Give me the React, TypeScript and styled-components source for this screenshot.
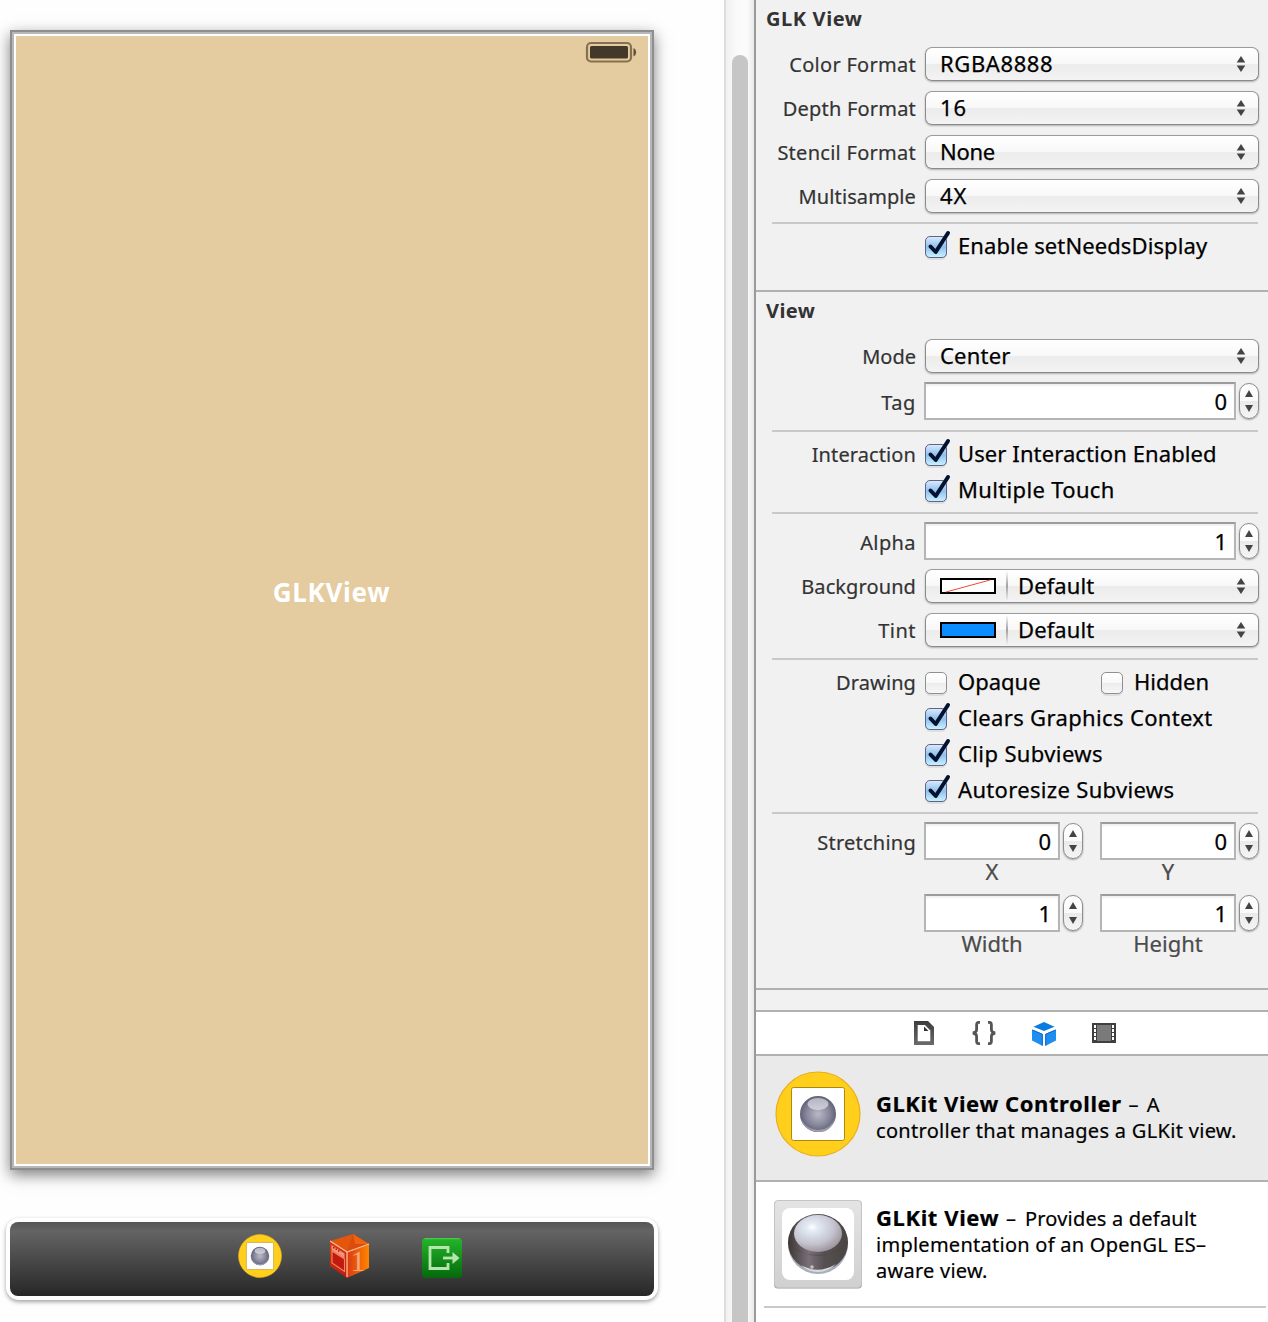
import React from "react";
import styled, { createGlobalStyle, css } from "styled-components";

const Global = createGlobalStyle`
  * { box-sizing: border-box; }
  body {
    margin: 0;
    background: #fff;
    font-family: "Noto Sans", "Open Sans", sans-serif;
    overflow: hidden;
  }
`;

const Window = styled.div`
  display: flex;
  width: 1268px;
  height: 1322px;
  background: #fefefe;
  overflow: hidden;
`;

const Canvas = styled.main`
  width: 724px;
  padding: 30px 0 0 6px;
  display: flex;
  flex-direction: column;
  gap: 48px;
`;

const Device = styled.section`
  width: 644px;
  height: 1140px;
  margin-left: 4px;
  border: 2px solid #8e8e8e;
  box-shadow: 0 5px 14px rgba(0, 0, 0, 0.5);
`;

const Bezel = styled.div`
  height: 100%;
  border: 2px solid #b7b7b7;
  background: #fff;
  padding: 2px;
`;

const Screen = styled.div`
  height: 100%;
  background: #e5cba0;
  display: flex;
  flex-direction: column;
`;

const StatusBar = styled.div`
  height: 32px;
  padding: 4px 10px 0 0;
  display: flex;
  justify-content: flex-end;
`;

const ScreenBody = styled.div`
  flex: 1;
  display: flex;
  align-items: center;
  justify-content: center;
  padding: 0 1px 48px 0;
  color: #fff;
  font-size: 26px;
  font-weight: 700;
`;

const Dock = styled.div`
  width: 652px;
  height: 82px;
  border: 4px solid #fff;
  border-radius: 13px;
  background: #fff;
  box-shadow: 0 2px 4px rgba(0, 0, 0, 0.36);
`;

const DockInner = styled.div`
  height: 74px;
  border-radius: 8px;
  background: linear-gradient(#555 0, #646464 12%, #272727 100%);
  display: flex;
  align-items: center;
  padding: 0 0 6px 228px;
  gap: 48px;
`;

const ScrollTrack = styled.div`
  width: 30px;
  border-left: 2px solid #dedede;
  padding: 55px 0 0 6px;
  background: linear-gradient(90deg, #f1f1f1, #fafafa 40%, #fbfbfb 75%, #e9e9e9);
`;

const ScrollThumb = styled.div`
  width: 16px;
  height: 1300px;
  border-radius: 8px;
  background: #c6c6c6;
`;

const Inspector = styled.aside`
  width: 514px;
  border-left: 2px solid #999;
  background: #f1f1f1;
`;

const Section = styled.section<{ $h: number }>`
  height: ${(p) => p.$h}px;
  border-bottom: 2px solid #b1b1b1;
`;

const Title = styled.h2`
  margin: 0;
  height: 42px;
  padding: 5px 0 0 10px;
  font-size: 20px;
  line-height: 27px;
  font-weight: 700;
  color: #333;
`;

const Row = styled.div<{ $h: number }>`
  display: grid;
  grid-template-columns: 160px 344px;
  column-gap: 8px;
  height: ${(p) => p.$h}px;
  align-items: center;
`;

const Label = styled.label<{ $low?: boolean }>`
  text-align: right;
  font-size: 20px;
  line-height: 28px;
  padding-top: ${(p) => (p.$low ? 4 : 2)}px;
  color: #333;
  -webkit-text-stroke: 0.2px #333;
`;

const Controls = styled.div`
  display: flex;
  align-items: center;
`;

const Divider = styled.hr<{ $top?: number }>`
  margin: ${(p) => p.$top ?? 4}px 10px 4px 16px;
  border: 0;
  height: 2px;
  background: #c9c9c9;
`;

const Select = styled.button`
  display: flex;
  align-items: center;
  width: 334px;
  height: 34px;
  margin: 0 0 0 1px;
  padding: 0 12px 0 14px;
  border: 1px solid #8b8b8b;
  border-top-color: #9c9c9c;
  border-radius: 7px;
  background: linear-gradient(#fff 0, #f8f8f8 50%, #ececec 51%, #f3f3f3 100%);
  box-shadow: 0 1px 2px rgba(0, 0, 0, 0.28);
  font-family: inherit;
  font-size: 22px;
  line-height: 30px;
  color: #000;
  text-align: left;
`;

const Value = styled.span`
  flex: 1;
  padding-bottom: 2px;
  -webkit-text-stroke: 0.25px #000;
`;

const Well = styled.span`
  display: flex;
  align-items: center;
  gap: 10px;
  margin-right: 10px;
`;

const WellRule = styled.span`
  width: 2px;
  height: 30px;
  background: linear-gradient(rgba(160, 160, 160, 0), #a2a2a2 50%, rgba(160, 160, 160, 0));
`;

const Field = styled.div<{ $w: number }>`
  flex: none;
  width: ${(p) => p.$w}px;
  height: 38px;
  border: 2px solid #b5b5b5;
  border-top-color: #9c9c9c;
  background: #fff;
  box-shadow: inset 0 2px 2px rgba(0, 0, 0, 0.06);
  font-size: 22px;
  line-height: 34px;
  text-align: right;
  padding-right: 7px;
  -webkit-text-stroke: 0.25px #000;
`;

const StepperBox = styled.div`
  flex: none;
  width: 20px;
  height: 36px;
  margin: 0 17px 0 3px;
  border: 1px solid #8d8d8d;
  border-radius: 10px;
  background: linear-gradient(#fff 0, #fafafa 50%, #eaeaea 51%, #f5f5f5 100%);
  box-shadow: 0 1px 2px rgba(0, 0, 0, 0.35);
  display: flex;
  align-items: center;
  justify-content: center;
`;

const Check = styled.label<{ $w?: number }>`
  display: flex;
  align-items: center;
  gap: 7px;
  font-size: 22px;
  line-height: 30px;
  color: #000;
  -webkit-text-stroke: 0.25px #000;
  ${(p) => p.$w && css`width: ${p.$w}px;`}
`;

const CheckText = styled.span`
  padding-bottom: 2px;
`;

const CheckMark = styled.svg`
  flex: none;
`;

const Pair = styled.div<{ $h: number }>`
  display: grid;
  grid-template-columns: 136px 136px;
  column-gap: 40px;
  height: ${(p) => p.$h}px;
  padding-left: 168px;
  text-align: center;
  font-size: 22px;
  line-height: 14px;
  color: #4b4b4b;
  -webkit-text-stroke: 0.2px #4b4b4b;
`;

const Gap = styled.div`
  height: 20px;
`;

const Tabs = styled.nav`
  height: 44px;
  border-top: 2px solid #b1b1b1;
  background: #fff;
  display: grid;
  grid-template-columns: repeat(4, 60px);
  justify-content: center;
  align-items: center;
  justify-items: center;
  padding-left: 4px;
`;

const Library = styled.div`
  height: 268px;
  background: #fff;
`;

const LibraryItem = styled.article<{ $selected?: boolean }>`
  display: flex;
  align-items: center;
  color: #000;
  ${(p) =>
    p.$selected
      ? css`
          gap: 15px;
          height: 128px;
          padding: 0 0 8px 19px;
          background: #eaeaea;
          border-top: 2px solid #b1b1b1;
          border-bottom: 2px solid #b1b1b1;
        `
      : css`
          gap: 14px;
          height: 124px;
          padding: 0 0 0 16px;
        `}
`;

const LibraryRule = styled(Divider)`
  margin: 0 2px 0 8px;
`;

const Copy = styled.p<{ $drop?: number }>`
  margin: 0;
  padding-top: ${(p) => p.$drop ?? 0}px;
  font-size: 20px;
  line-height: 26px;
  white-space: pre;
  -webkit-text-stroke: 0.2px #000;
  b {
    font-size: 22px;
  }
`;

const Line = styled.span`
  display: block;
`;

const T = styled.span<{ $t?: number }>`
  letter-spacing: ${(p) => p.$t ?? 0}px;
`;

const PopupArrows = () => (
  <svg width="10" height="16" viewBox="0 0 10 16">
    <path d="M5 0 L9.3 6.5 H0.7Z" fill="#444" />
    <path d="M5 16 L9.3 9.5 H0.7Z" fill="#444" />
  </svg>
);

const Popup = ({ children, t, well }: { children: string; t?: number; well?: React.ReactNode }) => (
  <Select>
    {well && (
      <Well>
        {well}
        <WellRule />
      </Well>
    )}
    <Value><T $t={t}>{children}</T></Value>
    <PopupArrows />
  </Select>
);

const Stepper = () => (
  <StepperBox>
    <svg width="8" height="22" viewBox="0 0 8 22">
      <path d="M4 0 L8 7 H0Z" fill="#444" />
      <path d="M4 22 L8 15 H0Z" fill="#444" />
    </svg>
  </StepperBox>
);

const CheckBox = ({ on }: { on?: boolean }) => (
  <CheckMark width="27" height="32" viewBox="0 0 27 32">
    <defs>
      <linearGradient id="boxOn" x1="0" y1="0" x2="0" y2="1">
        <stop offset="0" stopColor="#dcebfa" />
        <stop offset=".5" stopColor="#8fc0f0" />
        <stop offset="1" stopColor="#cdf3ff" />
      </linearGradient>
      <linearGradient id="boxOff" x1="0" y1="0" x2="0" y2="1">
        <stop offset="0" stopColor="#fff" />
        <stop offset=".5" stopColor="#f8f8f8" />
        <stop offset=".52" stopColor="#ececec" />
        <stop offset="1" stopColor="#f8f8f8" />
      </linearGradient>
    </defs>
    <rect x="1.5" y="7.5" width="21" height="21.5" rx="4.5" fill="none" stroke="#000" strokeOpacity=".15" />
    <rect x="1.5" y="6.5" width="21" height="21" rx="4.5" fill={on ? "url(#boxOn)" : "url(#boxOff)"} stroke={on ? "#5c6488" : "#8f8f8f"} />
    {on && <path d="M6.5 16.5 L11.7 22 L24 3" fill="none" stroke="#03132f" strokeWidth="4" strokeLinecap="round" strokeLinejoin="round" />}
  </CheckMark>
);

const CheckItem = ({ on, t, w, children }: { on?: boolean; t?: number; w?: number; children: string }) => (
  <Check $w={w}>
    <CheckBox on={on} />
    <CheckText><T $t={t}>{children}</T></CheckText>
  </Check>
);

const Battery = () => (
  <svg width="54" height="24" viewBox="0 0 54 24">
    <rect x="3" y="3" width="44" height="18.5" rx="4" fill="none" stroke="#85714f" strokeWidth="2.2" />
    <rect x="6" y="6" width="38" height="12.5" rx="1.5" fill="#43382a" />
    <path d="M49.5 8 q2.6 1 2.6 4.2 q0 3.2 -2.6 4.2Z" fill="#5d4e38" />
  </svg>
);

const ControllerIcon = ({ size }: { size: number }) => (
  <svg width={size} height={size} viewBox="0 0 86 86">
    <defs>
      <radialGradient id="orb" cx=".5" cy=".5" r=".55">
        <stop offset="0" stopColor="#b9b9c6" />
        <stop offset=".6" stopColor="#85859a" />
        <stop offset="1" stopColor="#56566c" />
      </radialGradient>
      <linearGradient id="orbShine" x1="0" y1="0" x2="0" y2="1">
        <stop offset="0" stopColor="#b5b5c2" />
        <stop offset="1" stopColor="#cfcfdb" />
      </linearGradient>
    </defs>
    <circle cx="43" cy="43" r="42" fill="#ffcf1c" stroke="#e9ae1e" strokeWidth="1.2" />
    <rect x="16.5" y="16.5" width="53" height="53" rx="2" fill="#fff" stroke="#a98b14" />
    <circle cx="43" cy="43" r="18" fill="url(#orb)" />
    <path d="M26 48 Q32 59 43 59 Q55 59 60 47 Q56 62 43 61 Q30 60 26 48Z" fill="#9d9db0" />
    <ellipse cx="43" cy="33" rx="10.5" ry="6" fill="url(#orbShine)" />
  </svg>
);

const ResponderIcon = () => (
  <svg width="42" height="46" viewBox="0 0 42 46">
    <defs>
      <linearGradient id="cubeR" x1="0" y1="0" x2="1" y2="0">
        <stop offset="0" stopColor="#d93a12" />
        <stop offset="1" stopColor="#ff8500" />
      </linearGradient>
      <linearGradient id="cubeL" x1="0" y1="0" x2="0" y2="1">
        <stop offset="0" stopColor="#d93a10" />
        <stop offset="1" stopColor="#c01a10" />
      </linearGradient>
    </defs>
    <path d="M0 8 L23 1 L39 11 L17 19Z" fill="#e4560c" />
    <path d="M23 1 L39 11 L17 19Z" fill="#cf4410" opacity=".55" />
    <path d="M23 1 L39 11 L25 11Z" fill="#f4690c" opacity=".8" />
    <path d="M0 8 L17 19 V45 L0 33Z" fill="url(#cubeL)" />
    <path d="M17 19 L39 11 V35 L17 45Z" fill="url(#cubeR)" />
    <path d="M0 8 L17 19 L39 11 M17 19 V44" fill="none" stroke="#ffb99a" strokeWidth="1.3" />
    <path d="M1.5 12 L14.5 20.5 V25.5 L1.5 17Z" fill="#f2937a" />
    <path d="M3 14.7 h1.5 M5.5 16.3 h1.5 M8 18 h1.5" stroke="#a81b10" strokeWidth="1.6" />
    <path d="M2 18 L14.5 26 V38.5 L2 30Z" fill="#c01a12" stroke="#f08a50" strokeWidth="1.1" />
    <text x="20.5" y="37.5" fontFamily="Liberation Serif, serif" fontSize="30" fill="#f9a67c">1</text>
  </svg>
);

const ExitSvg = styled.svg`
  margin: 4px 0 0 1px;
`;

const ExitIcon = () => (
  <ExitSvg width="42" height="42" viewBox="0 0 42 42">
    <defs>
      <linearGradient id="exit" x1="0" y1="0" x2="0" y2="1">
        <stop offset="0" stopColor="#25b52b" />
        <stop offset="1" stopColor="#04690c" />
      </linearGradient>
    </defs>
    <rect x="1" y="1" width="40" height="40" rx="4" fill="url(#exit)" />
    <path d="M3.5 1.7 H38.5" stroke="#4fd04f" />
    <path d="M27 16 V10.500 H9 V31.500 H27 V26" fill="none" stroke="#b4e6ac" strokeWidth="2.800" />
    <path d="M22 21 H33" stroke="#b4e6ac" strokeWidth="2.8" />
    <path d="M31.500 15 L38.5 21 L31.500 27Z" fill="#b4e6ac" />
  </ExitSvg>
);

const ViewIcon = () => (
  <svg width="90" height="92" viewBox="1 0 90 92">
    <defs>
      <linearGradient id="tile" x1="0" y1="0" x2="0" y2="1">
        <stop offset="0" stopColor="#e4e4e4" />
        <stop offset="1" stopColor="#d0d0d0" />
      </linearGradient>
      <linearGradient id="ballBase" x1="0" y1="0" x2="1" y2="0">
        <stop offset="0" stopColor="#3c3634" />
        <stop offset=".35" stopColor="#7a7078" />
        <stop offset=".6" stopColor="#575052" />
        <stop offset="1" stopColor="#4a4442" />
      </linearGradient>
      <radialGradient id="ballTop" cx=".38" cy=".33" r=".75">
        <stop offset="0" stopColor="#fff" />
        <stop offset=".15" stopColor="#e4ebf4" />
        <stop offset=".6" stopColor="#c4c4d0" />
        <stop offset="1" stopColor="#94898f" />
      </radialGradient>
    </defs>
    <rect x="3" y="3" width="88" height="87.500" rx="4" fill="#9a9a9a" />
    <rect x="3.5" y="2.5" width="87" height="87" rx="3.5" fill="url(#tile)" stroke="#c4c4c4" />
    <rect x="11" y="10" width="72" height="72" rx="8" fill="#fff" />
    <circle cx="47" cy="46" r="30" fill="#a7b0ba" />
    <ellipse cx="47" cy="44.5" rx="30" ry="28.5" fill="url(#ballBase)" />
    <path d="M19 46 Q47 70 75 46 Q71 56 47 57 Q25 56 19 46Z" fill="#4b4444" opacity=".6" />
    <ellipse cx="47" cy="35.5" rx="24" ry="18.5" fill="url(#ballTop)" />
    <path d="M30 67 Q47 77 65 66 Q57 74 47 74 Q37 74 30 67Z" fill="#d5dde2" />
    <circle cx="41" cy="69" r="1.8" fill="#c3bfc4" />
  </svg>
);

const FileTab = () => (
  <svg width="20" height="24" viewBox="0 0 20 24">
    <defs>
      <linearGradient id="tabGrey" x1="0" y1="0" x2="0" y2="1">
        <stop offset="0" stopColor="#3c3c3c" />
        <stop offset="1" stopColor="#6a6a6a" />
      </linearGradient>
    </defs>
    <path d="M0 0 H14 L20 6 V24 H0Z" fill="url(#tabGrey)" />
    <path d="M3.700 4 H11 L16.300 9.500 V20.300 H3.700Z" fill="#fff" />
    <path d="M10 5.5 V10 H14.5Z" fill="#333" />
  </svg>
);

const BracesTab = () => (
  <svg width="24" height="24" viewBox="0 0 24 24" fill="none" stroke="#555" strokeWidth="2.8">
    <path d="M8 1.4 H6.5 Q4.6 1.400 4.6 4 V8.500 Q4.600 11.500 0.800 12 Q4.600 12.500 4.600 15.500 V20 Q4.600 22.600 6.500 22.600 H8" />
    <path d="M16 1.400 H17.500 Q19.400 1.400 19.400 4 V8.500 Q19.400 11.500 23.200 12 Q19.400 12.500 19.400 15.500 V20 Q19.400 22.600 17.500 22.600 H16" />
  </svg>
);

const CubeSvg = styled.svg`
  margin-top: 2px;
`;

const CubeTab = () => (
  <CubeSvg width="26" height="26" viewBox="0 0 26 26">
    <path d="M2.5 5.800 L13 1 L23.5 5.800 L13 10Z" fill="#0b7be0" />
    <path d="M1 8.500 L11.700 13 V25 L1 19.500Z" fill="#1f8ef1" />
    <path d="M25 8.500 L14.300 13 V25 L25 19.500Z" fill="#1f8ef1" />
    <path d="M1.500 9 L11.300 13.300 V24.500 M24.500 9 L14.700 13.300 V24.500" fill="none" stroke="#0a68c4" />
  </CubeSvg>
);

const FilmTab = () => (
  <svg width="24" height="20" viewBox="0 0 24 20">
    <rect width="24" height="20" fill="#3f3f3f" />
    <rect x="5" y="2" width="14" height="16" fill="#7a7a7a" />
    {[2, 6, 10, 14].map((y) => (
      <g key={y} fill="#fff">
        <rect x="2" y={y} width="2" height="3" />
        <rect x="20" y={y} width="2" height="3" />
      </g>
    ))}
  </svg>
);

const Swatch = ({ color, empty }: { color: string; empty?: boolean }) => (
  <svg width="56" height="16" viewBox="0 0 56 16">
    <rect x="1" y="1" width="54" height="14" fill={color} stroke="#000" strokeWidth="2" />
    {empty && <path d="M6 14 L50 2" stroke="#f04a32" />}
  </svg>
);

export default function App() {
  return (
    <Window>
      <Global />
      <Canvas>
        <Device>
          <Bezel>
            <Screen>
              <StatusBar><Battery /></StatusBar>
              <ScreenBody><T $t={0.7}>GLKView</T></ScreenBody>
            </Screen>
          </Bezel>
        </Device>
        <Dock>
          <DockInner>
            <ControllerIcon size={44} />
            <ResponderIcon />
            <ExitIcon />
          </DockInner>
        </Dock>
      </Canvas>
      <ScrollTrack><ScrollThumb /></ScrollTrack>
      <Inspector>
        <Section $h={292}>
          <Title><T $t={0.6}>GLK View</T></Title>
          <Row $h={44}><Label><T $t={0.28}>Color Format</T></Label><Popup t={0.6}>RGBA8888</Popup></Row>
          <Row $h={44}><Label><T $t={0.2}>Depth Format</T></Label><Popup t={0.8}>16</Popup></Row>
          <Row $h={44}><Label><T $t={0.27}>Stencil Format</T></Label><Popup t={-0.3}>None</Popup></Row>
          <Row $h={44}><Label><T $t={0.1}>Multisample</T></Label><Popup t={0.8}>4X</Popup></Row>
          <Divider />
          <Row $h={36}><Label /><CheckItem on t={0.1}>Enable setNeedsDisplay</CheckItem></Row>
        </Section>
        <Section $h={698}>
          <Title><T $t={0.4}>View</T></Title>
          <Row $h={44}><Label><T>Mode</T></Label><Popup t={0.2}>Center</Popup></Row>
          <Row $h={46}><Label $low><T $t={0.6}>Tag</T></Label><Controls><Field $w={312}>0</Field><Stepper /></Controls></Row>
          <Divider $top={6} />
          <Row $h={36}><Label><T $t={0.1}>Interaction</T></Label><CheckItem on t={0.1}>User Interaction Enabled</CheckItem></Row>
          <Row $h={36}><Label /><CheckItem on t={0.34}>Multiple Touch</CheckItem></Row>
          <Divider />
          <Row $h={46}><Label $low><T $t={0.4}>Alpha</T></Label><Controls><Field $w={312}>1</Field><Stepper /></Controls></Row>
          <Row $h={44}>
            <Label><T $t={0.1}>Background</T></Label>
            <Popup t={0.1} well={<Swatch color="#fff" empty />}>Default</Popup>
          </Row>
          <Row $h={44}>
            <Label><T $t={0.5}>Tint</T></Label>
            <Popup t={0.1} well={<Swatch color="#0a8dff" />}>Default</Popup>
          </Row>
          <Divider $top={6} />
          <Row $h={36}><Label><T $t={0.1}>Drawing</T></Label><Controls><CheckItem w={176}>Opaque</CheckItem><CheckItem>Hidden</CheckItem></Controls></Row>
          <Row $h={36}><Label /><CheckItem on t={0.35}>Clears Graphics Context</CheckItem></Row>
          <Row $h={36}><Label /><CheckItem on t={0.38}>Clip Subviews</CheckItem></Row>
          <Row $h={36}><Label /><CheckItem on t={0.33}>Autoresize Subviews</CheckItem></Row>
          <Divider />
          <Row $h={46}><Label $low><T $t={0.24}>Stretching</T></Label><Controls><Field $w={136}>0</Field><Stepper /><Field $w={136}>0</Field><Stepper /></Controls></Row>
          <Pair $h={26}><T>X</T><T>Y</T></Pair>
          <Row $h={46}><Label /><Controls><Field $w={136}>1</Field><Stepper /><Field $w={136}>1</Field><Stepper /></Controls></Row>
          <Pair $h={26}><T>Width</T><T>Height</T></Pair>
        </Section>
        <Gap />
        <Tabs><FileTab /><BracesTab /><CubeTab /><FilmTab /></Tabs>
        <Library>
          <LibraryItem $selected>
            <ControllerIcon size={86} />
            <Copy $drop={5}>
              <Line><b><T $t={0.57}>GLKit View Controller</T></b><T $t={1.5}> – A</T></Line>
              <Line><T $t={0.31}>controller that manages a GLKit view.</T></Line>
            </Copy>
          </LibraryItem>
          <LibraryItem>
            <ViewIcon />
            <Copy>
              <Line><b><T $t={0.6}>GLKit View</T></b><T $t={1.8}> – </T><T $t={0.2}>Provides a default</T></Line>
              <Line><T $t={0.26}>implementation of an OpenGL ES–</T></Line>
              <Line><T $t={0.25}>aware view.</T></Line>
            </Copy>
          </LibraryItem>
          <LibraryRule />
        </Library>
      </Inspector>
    </Window>
  );
}
